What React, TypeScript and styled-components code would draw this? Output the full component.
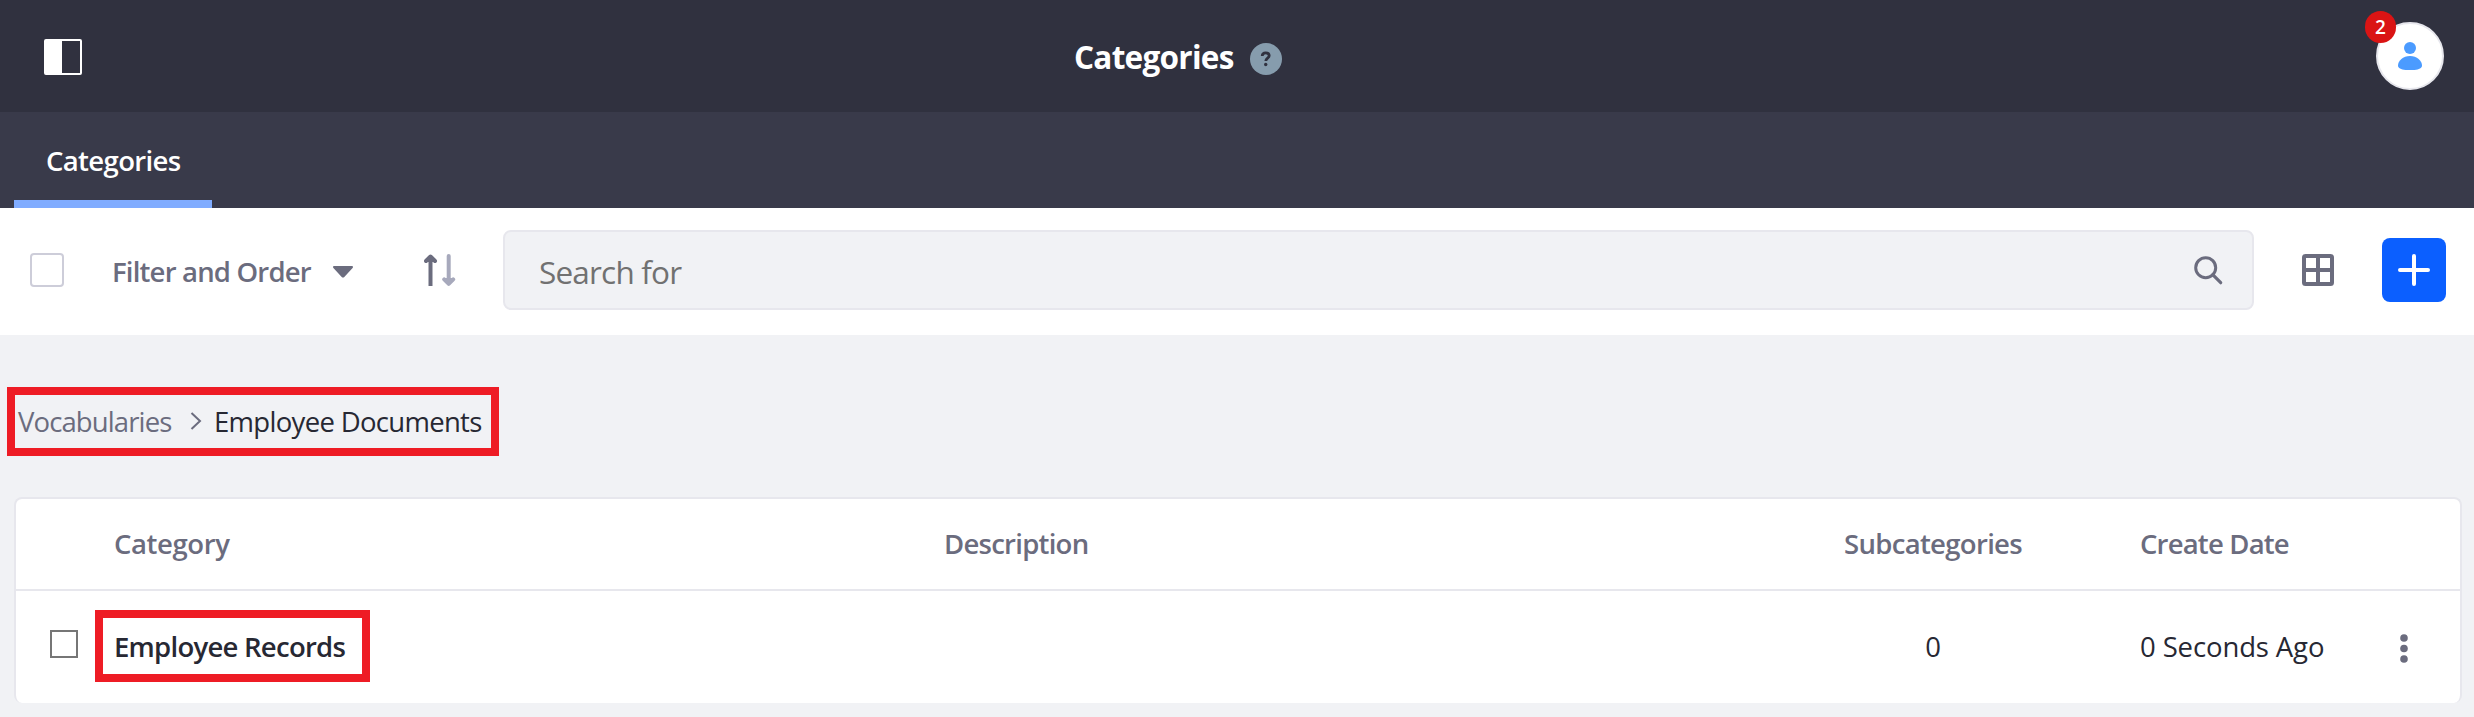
import React from "react";
import styled, { createGlobalStyle } from "styled-components";

const Global = createGlobalStyle`
  *, *::before, *::after { box-sizing: border-box; }
  body {
    margin: 0;
    background: #f1f2f5;
    font-family: "Open Sans", "Noto Sans", sans-serif;
    font-size: 27.5px;
    line-height: 36px;
    color: #272833;
  }
  svg { display: block; flex: none; }
`;

const Label = styled.span<{ $track?: number }>`
  white-space: nowrap;
  letter-spacing: ${(p) => p.$track ?? -0.7}px;
`;

const Page = styled.div`
  min-height: 717px;
  display: flex;
  flex-direction: column;
`;

const Header = styled.header`
  height: 112px;
  padding: 0 30px 0 44px;
  background: #30313f;
  display: grid;
  grid-template-columns: 1030px 1fr auto;
  align-items: center;
`;

const SidebarToggle = styled.div`
  padding-top: 2px;
`;

const Title = styled.h1`
  margin: 0;
  display: flex;
  align-items: center;
  font-size: 31.5px;
  line-height: 40px;
  font-weight: 700;
  color: #fff;
`;

const TitleText = styled(Label)`
  padding-top: 2px;
`;

const Help = styled.span`
  width: 32px;
  height: 32px;
  margin: 6px 0 0 16px;
  border-radius: 50%;
  background: #869cad;
`;

const Avatar = styled.div`
  position: relative;
  width: 68px;
  height: 68px;
  border: 2px solid #e7e7ed;
  border-radius: 50%;
  background: #fff;
  display: flex;
  align-items: center;
  justify-content: center;
`;

const Badge = styled.span`
  position: absolute;
  left: -13px;
  top: -13px;
  width: 31px;
  height: 32px;
  border-radius: 15.5px;
  background: #da1414;
  color: #fff;
  font-size: 19px;
  line-height: 33px;
  font-weight: 600;
  text-align: center;
`;

const Nav = styled.nav`
  height: 96px;
  padding-left: 14px;
  background: #393a4a;
  display: flex;
`;

const Tab = styled.a`
  width: 198px;
  padding: 10px 0 0 32px;
  border-bottom: 8px solid #80acff;
  color: #fff;
  font-weight: 600;
  display: flex;
  align-items: center;
`;

const Toolbar = styled.div`
  height: 127px;
  padding: 0 28px 3px 30px;
  background: #fff;
  display: flex;
  align-items: center;
`;

const SelectAll = styled.span`
  width: 34px;
  height: 34px;
  border: 2px solid #cdcdd9;
  border-radius: 4px;
`;

const FilterButton = styled.div`
  width: 241px;
  margin: 3px 0 0 48px;
  display: flex;
  align-items: center;
  justify-content: space-between;
  color: #6b6c7e;
  font-weight: 600;
`;

const SortButton = styled.div`
  margin: 0 47px 0 71px;
`;

const SearchBox = styled.div`
  flex: 1;
  height: 80px;
  padding: 0 29px 0 34px;
  border: 2px solid #e7e7ed;
  border-radius: 8px;
  background: #f1f2f5;
  display: flex;
  align-items: center;
  justify-content: space-between;
  color: #717171;
  font-size: 31.5px;
  line-height: 40px;
`;

const Placeholder = styled(Label)`
  padding-top: 3px;
`;

const ViewButton = styled.div`
  margin: 0 48px;
`;

const AddButton = styled.div`
  width: 64px;
  height: 64px;
  border-radius: 8px;
  background: #0b5fff;
  display: flex;
  align-items: center;
  justify-content: center;
`;

const Content = styled.main`
  padding: 52px 12px 14px 7px;
`;

const Highlight = styled.div`
  border: 8px solid #ee1c25;
  display: flex;
  align-items: center;
`;

const Breadcrumb = styled(Highlight)`
  width: 492px;
  height: 69px;
  padding-left: 3px;
`;

const Crumb = styled(Label)<{ $active?: boolean }>`
  color: ${(p) => (p.$active ? "#272833" : "#6b6c7e")};
  ${(p) => !p.$active && "width: 172px;"}
`;

const ChevronSlot = styled.span`
  width: 24px;
  padding-bottom: 1px;
`;

const Table = styled.section`
  margin: 41px 0 0 7px;
  height: 206px;
  border: 2px solid #e7e7ed;
  border-bottom: 0;
  border-radius: 8px;
  background: #fff;
`;

const Row = styled.div<{ $head?: boolean }>`
  height: ${(p) => (p.$head ? 92 : 112)}px;
  border-bottom: ${(p) => (p.$head ? "2px solid #e7e7ed" : "0")};
  color: ${(p) => (p.$head ? "#6b6c7e" : "inherit")};
  font-weight: ${(p) => (p.$head ? 600 : 400)};
  display: grid;
  grid-template-columns: 74px 830px 900px 296px 232px 1fr;
  align-items: center;
`;

const Cell = styled.div`
  padding-left: 24px;
`;

const Count = styled.div`
  width: 178px;
  margin-left: 24px;
  text-align: center;
`;

const RowCheckbox = styled.div`
  width: 28px;
  height: 28px;
  margin: 0 0 6px 34px;
  border: 2px solid #767676;
`;

const RecordHighlight = styled(Highlight)`
  width: 275px;
  height: 72px;
  margin: 0 0 2px 5px;
  padding: 2px 0 0 11px;
  font-weight: 600;
`;

const Actions = styled.div`
  display: flex;
  justify-content: center;
  padding-top: 3px;
`;

const SidebarIcon = () => (
  <svg width="38" height="36" viewBox="0 0 38 36">
    <rect x="1" y="1" width="36" height="34" rx="1" fill="none" stroke="#fff" strokeWidth="2" />
    <path d="M1 1h17v34H1z" fill="#fff" />
  </svg>
);

const HelpIcon = () => (
  <svg width="32" height="32" viewBox="0 0 32 32" fill="none">
    <path d="M12.2 13c.1-2.200 1.500-3.200 3.500-3.200s3.500 1.100 3.500 2.900c0 2.500-3.400 2.500-3.400 5.300" stroke="#30313f" strokeWidth="2.800" />
    <circle cx="15.7" cy="21.500" r="1.700" fill="#30313f" />
  </svg>
);

const UserIcon = () => (
  <svg width="24" height="28" viewBox="0 0 24 28" fill="#4b9bff">
    <circle cx="12" cy="6" r="6" />
    <path d="M12 14c7 0 12 4.700 12 9.500 0 3.500-5 4.700-12 4.700S0 27 0 23.500C0 18.700 5 14 12 14z" />
  </svg>
);

const CaretIcon = () => (
  <svg width="20" height="12" viewBox="0 0 20 12">
    <path d="M1.200 0h17.600c1.100 0 1.600 1.200.8 2l-8.300 9c-.7.800-1.900.8-2.600 0L.4 2C-.4 1.200.1 0 1.200 0z" fill="#6b6c7e" />
  </svg>
);

const SortIcon = () => (
  <svg width="32" height="32" viewBox="0 0 32 32" fill="none" strokeWidth="4" strokeLinecap="round" strokeLinejoin="round">
    <g stroke="#6b6c7e">
      <path d="M6.500 4v28" strokeLinecap="butt" />
      <path d="M2 7l4.500-4.500L11 7" />
      <path d="M3.500 6h6" />
    </g>
    <g stroke="#a7a9bc">
      <path d="M24.700 2v26" />
      <path d="M20.200 25.300l4.500 4.500 4.500-4.500" />
      <path d="M21.700 26h6" />
    </g>
  </svg>
);

const SearchIcon = () => (
  <svg width="29" height="29" viewBox="0 0 29 29" fill="none" stroke="#6b6c7e" strokeWidth="3">
    <circle cx="11.700" cy="11.700" r="10" />
    <path d="M18.700 18.700l8 8" strokeLinecap="round" strokeWidth="3.200" />
  </svg>
);

const GridIcon = () => (
  <svg width="32" height="32" viewBox="0 0 32 32" fill="none" stroke="#6b6c7e" strokeWidth="4">
    <rect x="2" y="2" width="28" height="28" rx="1.500" />
    <path d="M16 2v28M2 16h28" />
  </svg>
);

const PlusIcon = () => (
  <svg width="32" height="32" viewBox="0 0 32 32" stroke="#fff" strokeWidth="4" strokeLinecap="round">
    <path d="M16 2v28M2 16h28" />
  </svg>
);

const ChevronIcon = () => (
  <svg width="12" height="18" viewBox="0 0 12 18" fill="none" stroke="#6b6c7e" strokeWidth="2">
    <path d="M1.500 1l8.500 8-8.500 8" />
  </svg>
);

const DotsIcon = () => (
  <svg width="8" height="29" viewBox="0 0 8 29" fill="#6b6c7e">
    <circle cx="4" cy="4" r="3.800" />
    <circle cx="4" cy="14.500" r="3.800" />
    <circle cx="4" cy="25" r="3.800" />
  </svg>
);

export default function App() {
  return (
    <>
      <Global />
      <Page>
        <Header>
          <SidebarToggle><SidebarIcon /></SidebarToggle>
          <Title>
            <TitleText $track={-0.72}>Categories</TitleText>
            <Help><HelpIcon /></Help>
          </Title>
          <Avatar>
            <UserIcon />
            <Badge>2</Badge>
          </Avatar>
        </Header>
        <Nav>
          <Tab><Label $track={-0.64}>Categories</Label></Tab>
        </Nav>
        <Toolbar>
          <SelectAll />
          <FilterButton>
            <Label $track={-0.81}>Filter and Order</Label>
            <CaretIcon />
          </FilterButton>
          <SortButton><SortIcon /></SortButton>
          <SearchBox>
            <Placeholder $track={-0.81}>Search for</Placeholder>
            <SearchIcon />
          </SearchBox>
          <ViewButton><GridIcon /></ViewButton>
          <AddButton><PlusIcon /></AddButton>
        </Toolbar>
        <Content>
          <Breadcrumb>
            <Crumb $track={-0.88}>Vocabularies</Crumb>
            <ChevronSlot><ChevronIcon /></ChevronSlot>
            <Crumb $active $track={-0.69}>Employee Documents</Crumb>
          </Breadcrumb>
          <Table>
            <Row $head>
              <div />
              <Cell><Label $track={-0.4}>Category</Label></Cell>
              <Cell><Label $track={-0.74}>Description</Label></Cell>
              <Cell><Label $track={-0.68}>Subcategories</Label></Cell>
              <Cell><Label $track={-0.81}>Create Date</Label></Cell>
              <div />
            </Row>
            <Row>
              <RowCheckbox />
              <RecordHighlight><Label $track={-0.74}>Employee Records</Label></RecordHighlight>
              <div />
              <Count>0</Count>
              <Cell><Label $track={-0.12}>0 Seconds Ago</Label></Cell>
              <Actions><DotsIcon /></Actions>
            </Row>
          </Table>
        </Content>
      </Page>
    </>
  );
}
